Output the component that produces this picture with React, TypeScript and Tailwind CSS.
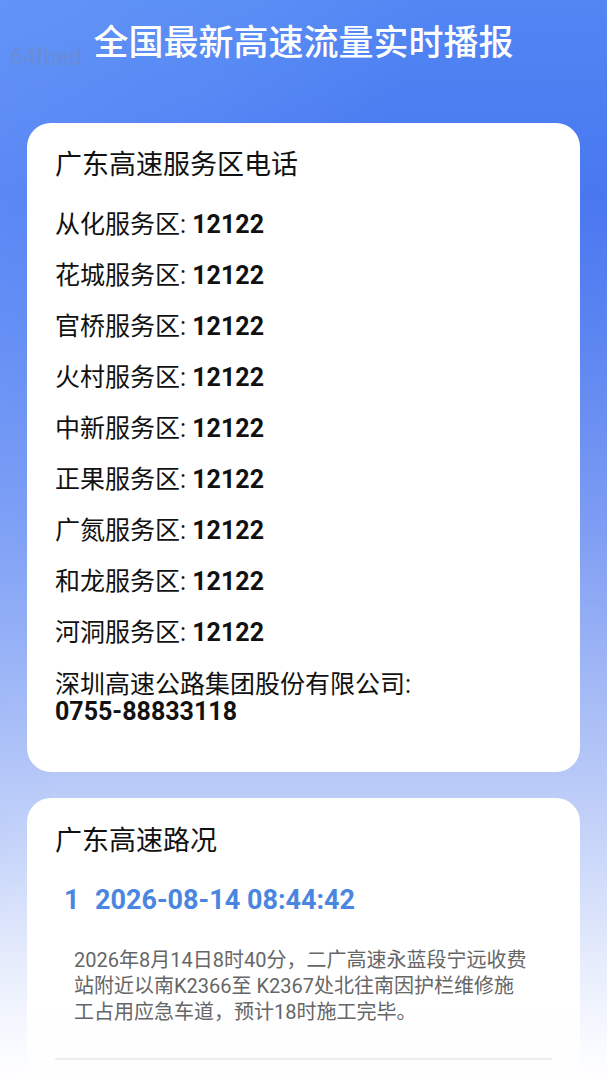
import React from "react";

const rows = ["从化", "花城", "官桥", "火村", "中新", "正果", "广氮", "和龙", "河洞"];

export default function App() {
  return (
    <div
      className="relative min-h-[1080px] w-full overflow-hidden bg-[linear-gradient(180deg,#5186f3_0%,#4977f0_18%,#5a84f1_30%,#7d9cf3_48%,#a8bdf6_65%,#c9d6f9_78%,#e6ecfc_88%,#fbfcff_97%,#ffffff_100%)]"
      style={{ fontFamily: '"Roboto","Noto Sans CJK SC","Noto Sans",sans-serif' }}
    >
      <div className="pointer-events-none absolute inset-0 bg-[linear-gradient(115deg,rgba(130,175,255,0.35)_0%,rgba(130,175,255,0.2)_22%,rgba(255,255,255,0)_40%)]" />
      <div className="absolute left-[10px] top-[44px] text-[23px] leading-[28px] text-[rgba(120,135,175,0.45)]">64fbed</div>
      <div className="relative px-[27px]">
        <h1 className="pt-[22px] text-center text-[35px] font-medium leading-[44px] text-white">全国最新高速流量实时播报</h1>
        <div className="mt-[57px] rounded-[24px] bg-white px-[28px] pb-[47px] pt-[25px]">
          <div className="text-[27px] leading-[34px] text-[#111]">广东高速服务区电话</div>
          <div className="mt-[17px]">
            {rows.map((r) => (
              <div key={r} className="text-[25px] leading-[51px] text-[#111]">
                {r}服务区: <span className="font-bold">12122</span>
              </div>
            ))}
          </div>
          <div className="mt-[13px] text-[25px] leading-[27px] text-[#111]">
            <div>深圳高速公路集团股份有限公司:</div>
            <div className="font-bold">0755-88833118</div>
          </div>
        </div>
        <div className="mt-[26px] rounded-t-[24px] bg-[linear-gradient(180deg,#ffffff_0%,#ffffff_70%,rgba(255,255,255,0.6)_100%)] px-[28px] pb-[30px] pt-[26px]">
          <div className="text-[27px] leading-[34px] text-[#111]">广东高速路况</div>
          <div className="mt-[25px] flex items-center text-[27px] font-bold leading-[34px] text-[#4a86e0]">
            <span className="ml-[9px] w-[31px]">1</span>
            <span>2026-08-14 08:44:42</span>
          </div>
          <p className="ml-[19px] mt-[30px] w-[456px] text-[20px] leading-[26px] text-[#666]">
            2026年8月14日8时40分，二广高速永蓝段宁远收费站附近以南K2366至 K2367处北往南因护栏维修施工占用应急车道，预计18时施工完毕。
          </p>
          <div className="mt-[33px] h-[2px] w-full bg-[#ebedf0]" />
        </div>
      </div>
    </div>
  );
}
